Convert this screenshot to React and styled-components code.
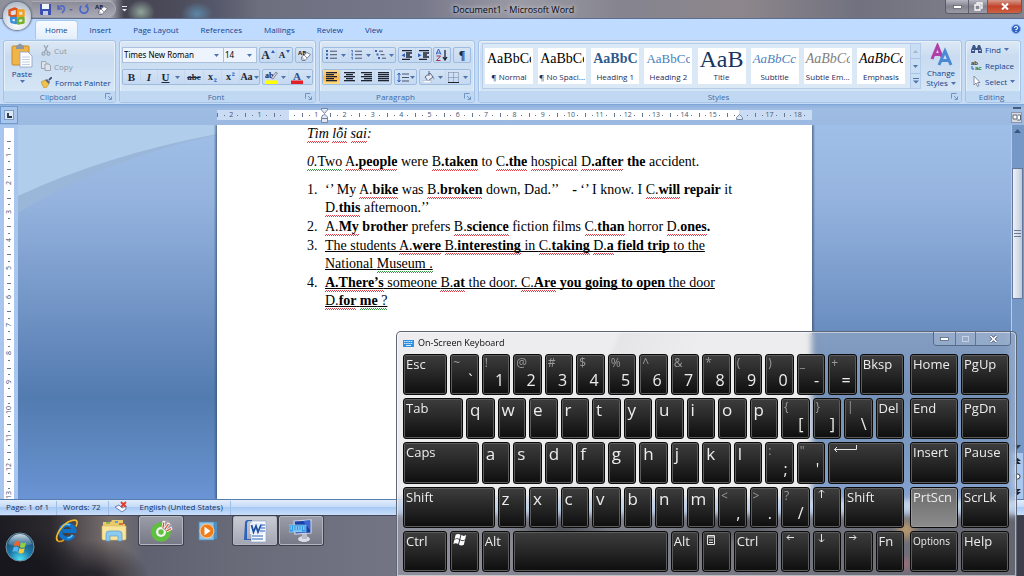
import React from "react";
import styled, { createGlobalStyle, css } from "styled-components";

const UI = `"Open Sans", "Noto Sans", sans-serif`;
const SERIF = `"Liberation Serif", "Times New Roman", serif`;

const GlobalStyle = createGlobalStyle`
  * { box-sizing: border-box; }
  html, body { margin: 0; height: 100%; }
  body { font-family: ${UI}; font-size: 8px; overflow: hidden; }
  button, select { font: inherit; color: inherit; margin: 0; padding: 0; border: 0; background: none; }
  svg { display: block; flex: none; }
`;

const Desktop = styled.div`
  height: 100vh;
  display: flex;
  flex-direction: column;
  overflow: hidden;
  position: relative;
  background: #6d6f7c;
`;

/* ---------- title bar ---------- */
const TitleBar = styled.header`
  height: 19px;
  flex: none;
  display: grid;
  grid-template-columns: 1fr auto 1fr;
  align-items: center;
  border-bottom: 1px solid #5d6f8c;
  background:
    radial-gradient(ellipse 14px 12px at 141px 12px, #90a59a, transparent),
    radial-gradient(ellipse 16px 12px at 197px 14px, #5d86a8, transparent),
    linear-gradient(90deg, #8f909a 0, #a6a7b0 110px, #454452 124px, #4a4a58 170px, #55586a 215px, #6d6e7e 260px, #77788a 420px, #9b9ba6 520px, #85848f 620px, #8d868c 740px, #71717f 860px, #85858f 100%);
`;
const QuickAccess = styled.div`
  display: flex;
  align-items: center;
  gap: 6px;
  margin-left: 32px;
  width: 84px;
  height: 16px;
  padding-left: 8px;
  border: 1px solid #a9aab6;
  border-left: 0;
  border-radius: 0 9px 9px 0;
  background: linear-gradient(#8c8c98, #a7a8b3);
`;
const QuickMore = styled.div`
  display: flex;
  align-items: center;
  gap: 6px;
`;
const IconButton = styled.button`
  display: flex;
  align-items: center;
  justify-content: center;
`;
const DocTitle = styled.h1`
  margin: 0;
  padding-left: 3px;
  padding-top: 2px;
  font-size: 9px;
  font-weight: 400;
  line-height: 16px;
  color: #08080c;
  text-shadow: 0 0 5px #d5d5dd, 0 0 5px #c5c5cc;
`;
const WindowButtons = styled.div`
  justify-self: end;
  align-self: start;
  display: flex;
  margin-right: 2px;
  height: 14px;
  border: 1px solid #595a66;
  border-top: 0;
  border-radius: 0 0 4px 4px;
  overflow: hidden;
`;
const WindowButton = styled.button`
  display: flex;
  align-items: center;
  justify-content: center;
  width: ${(p) => p.$w}px;
  background: ${(p) => (p.$close ? "linear-gradient(#d59a8c, #c2422a 50%, #ce6243)" : "linear-gradient(#b5b6c0, #82838f 50%, #9a9ba6)")};
  & + & { border-left: 1px solid #5f606c; }
`;
const OfficeButton = styled.button`
  position: absolute;
  z-index: 3;
  left: 3px;
  top: 2px;
  width: 28px;
  height: 28px;
  border-radius: 50%;
  display: flex;
  align-items: center;
  justify-content: center;
  background: radial-gradient(circle at 50% 75%, #fff, #d5dbe5 50%, #b5bdca 80%, #f0f3f8);
  box-shadow: 0 0 2px 1px #5e6b80;
`;

/* ---------- ribbon ---------- */
const TabRow = styled.nav`
  height: 20px;
  flex: none;
  display: flex;
  align-items: flex-end;
  gap: 4px;
  padding: 0 3px 0 36px;
  background: #bfdbff;
  color: #15428b;
`;
const Tab = styled.button`
  height: 18px;
  padding: 0 9px;
  line-height: 16px;
  border-radius: 3px 3px 0 0;
  ${(p) =>
    p.$active &&
    css`
      background: linear-gradient(#f7fbff, #e3eefb);
      box-shadow: 0 0 0 1px #a5c6ee;
      clip-path: inset(-1px -1px 0 -1px);
    `}
`;
const HelpSpot = styled.div`
  margin-left: auto;
  align-self: center;
`;
const Ribbon = styled.div`
  height: 66px;
  flex: none;
  display: flex;
  gap: 3px;
  padding: 1px 3px 1px;
  background: #c5dbf6;
  border-bottom: 1px solid #7fa6d6;
`;
const Group = styled.section`
  flex: ${(p) => (p.$grow ? "1 1 0" : "none")};
  width: ${(p) => (p.$w ? p.$w + "px" : "auto")};
  min-width: 0;
  display: flex;
  flex-direction: column;
  border: 1px solid #a5c3e6;
  border-radius: 3px;
  overflow: hidden;
  background: linear-gradient(#dce8f5, #cfdff1 20%, #c8dbf0 25%, #d9e9f8);
  box-shadow: inset 0 0 0 1px #e6f0fa;
  color: #15428b;
`;
const GroupBody = styled.div`
  flex: 1;
  min-height: 0;
  display: flex;
  padding: ${(p) => p.$pad || "0"};
  gap: ${(p) => p.$gap || 0}px;
`;
const GroupFoot = styled.footer`
  height: 11px;
  display: grid;
  grid-template-columns: 1fr auto 1fr;
  align-items: center;
  background: #c0d8f1;
  line-height: 11px;
  color: #3e6aaa;
  padding-right: 3px;
  svg { justify-self: end; }
`;
const PasteButton = styled.button`
  width: 32px;
  display: flex;
  flex-direction: column;
  align-items: center;
  line-height: 12px;
`;
const CommandList = styled.div`
  display: flex;
  flex-direction: column;
`;
const Command = styled.button`
  height: 16px;
  display: flex;
  align-items: center;
  gap: 3px;
  white-space: nowrap;
  color: ${(p) => (p.$off ? "#8d95a3" : "#15428b")};
`;
const Rows = styled.div`
  flex: 1;
  display: flex;
  flex-direction: column;
  gap: 6px;
`;
const Row = styled.div`
  display: flex;
  align-items: center;
  justify-content: space-between;
  height: 16px;
`;
const Combos = styled.div`
  display: flex;
  height: 16px;
`;
const Combo = styled.label`
  width: ${(p) => p.$w}px;
  display: flex;
  align-items: center;
  padding-right: 4px;
  border: 1px solid #abc1de;
  background: #edf4fd;
  & + & { border-left: 0; }
`;
const ComboSelect = styled.select`
  appearance: none;
  flex: 1;
  min-width: 0;
  height: 14px;
  padding-left: 1px;
  font-family: "Noto Sans", sans-serif;
  font-size: 8px;
  line-height: 14px;
  color: #000;
  outline: 0;
`;
const ButtonSet = styled.div`
  display: flex;
  height: 16px;
  border: 1px solid #9ebbe0;
  border-radius: 2px;
  background: linear-gradient(#d4e3f5, #c5d9f1);
`;
const ToolButton = styled.button`
  width: ${(p) => p.$w || 16}px;
  height: 14px;
  display: flex;
  align-items: center;
  justify-content: center;
  gap: ${(p) => p.$gap || 3}px;
  font-family: ${SERIF};
  font-size: ${(p) => p.$size || 10}px;
  font-weight: 700;
  line-height: 14px;
  color: #20293a;
  background: ${(p) => (p.$on ? "linear-gradient(#fbd98f, #ffb74c 60%, #ffe08a)" : "none")};
  & + & { border-left: 1px solid #c3d7ee; }
`;
const Gallery = styled.div`
  flex: 1;
  min-width: 0;
  display: flex;
  justify-content: space-between;
  align-items: center;
  height: 46px;
  border: 1px solid #b5cdea;
  background: #dbe8f6;
  padding-left: 2px;
  overflow: hidden;
`;
const StyleCard = styled.button`
  width: 48px;
  height: 36px;
  background: #fff;
  overflow: hidden;
  display: flex;
  flex-direction: column;
  color: #1e2a5a;
`;
const Preview = styled.span`
  height: 23px;
  width: 46px;
  overflow: hidden;
  white-space: nowrap;
  text-align: left;
  padding-left: 2px;
  font-family: ${SERIF};
  font-size: ${(p) => p.$size || 14}px;
  line-height: 22px;
  font-weight: ${(p) => (p.$bold ? 700 : 400)};
  font-style: ${(p) => (p.$italic ? "italic" : "normal")};
  color: ${(p) => p.$color || "#000"};
`;
const CardName = styled.span`
  width: 48px;
  text-align: center;
  line-height: 12px;
  white-space: nowrap;
`;
const GalleryScroll = styled.div`
  width: 10px;
  height: 44px;
  display: flex;
  flex-direction: column;
  border-left: 1px solid #b5cdea;
`;
const GalleryStep = styled(IconButton)`
  flex: 1;
  background: #c9ddf3;
  & + & { border-top: 1px solid #a9c5e6; }
`;
const ChangeStyles = styled.button`
  width: 36px;
  display: flex;
  flex-direction: column;
  align-items: center;
  line-height: 10px;
`;
const Inline = styled.span`
  display: flex;
  align-items: center;
  gap: 3px;
`;

/* ---------- rulers ---------- */
const RulerRow = styled.div`
  height: 20px;
  flex: none;
  display: grid;
  grid-template-columns: 18px 1fr 13px;
  align-items: center;
  background: linear-gradient(#8fb0de, #9fbce3 4px, #9bb9e1);
`;
const TabStop = styled.button`
  width: 18px;
  height: 18px;
  display: flex;
  align-items: center;
  justify-content: center;
  border: 1px solid #6f9ad0;
  background: #a8c6ec;
`;
const TabStopFace = styled.span`
  width: 10px;
  height: 10px;
  display: flex;
  align-items: center;
  justify-content: center;
  border: 1px solid #7d9cc8;
  background: #dce8f6;
`;
const HRuler = styled.div`
  position: relative;
  justify-self: center;
  width: 595px;
  height: 10px;
  display: flex;
  background: linear-gradient(90deg, #c9dcf3 72px, #fff 72px, #fff 522px, #c9dcf3 522px);
`;
const HCell = styled.span`
  flex: 1;
  text-align: center;
  font-size: 7px;
  line-height: 10px;
  color: #46556f;
  background:
    linear-gradient(#6a788f, #6a788f) 0 50% / 1px 4px no-repeat,
    linear-gradient(#6a788f, #6a788f) 25% 50% / 1px 1px no-repeat,
    linear-gradient(#6a788f, #6a788f) 75% 50% / 1px 1px no-repeat;
`;
const IndentMark = styled.span`
  position: absolute;
  left: ${(p) => p.$x}px;
  top: ${(p) => p.$y}px;
`;
const RulerToggle = styled(IconButton)`
  width: 11px;
  height: 20px;
  flex-direction: column;
  gap: 2px;
`;

/* ---------- work area ---------- */
const WorkArea = styled.main`
  flex: 1;
  min-height: 0;
  position: relative;
  display: grid;
  grid-template-columns: 18px 1fr 13px;
  background: linear-gradient(#a0bfe8, #95b3de 20%, #7a9ccc 42%, #6a8dc0 55%, #527bb0 73%, #5c86bd 85%, #6a94d4);
`;
const Swoosh = styled.svg`
  position: absolute;
  left: 18px;
  top: 0;
`;
const VRulerTrack = styled.div`
  min-height: 0;
  overflow: hidden;
  padding: 3px 4px 0;
  background: #a9c7ee;
`;
const VRuler = styled.div`
  height: 381px;
  padding-top: 13px;
  display: flex;
  flex-direction: column;
  background: #fff;
`;
const VCell = styled.span`
  flex: 1;
  display: flex;
  align-items: center;
  justify-content: center;
  font-size: 7px;
  line-height: 10px;
  color: #46556f;
  background:
    linear-gradient(#6a788f, #6a788f) 50% 0 / 4px 1px no-repeat,
    linear-gradient(#6a788f, #6a788f) 50% 25% / 2px 1px no-repeat,
    linear-gradient(#6a788f, #6a788f) 50% 75% / 2px 1px no-repeat;
`;
const Turned = styled.span`
  writing-mode: vertical-rl;
  transform: rotate(180deg);
`;
const Page = styled.article`
  position: relative;
  justify-self: center;
  width: 595px;
  padding: 0 0 0 90px;
  background: #fff;
  box-shadow: 0 0 3px 1px #3b5373;
  clip-path: inset(0 -3px 0 -3px);
  font-family: ${SERIF};
  font-size: 14px;
  line-height: 18px;
  color: #000;
  white-space: nowrap;
`;
const Para = styled.p`
  margin: 0 0 10px;
`;
const Questions = styled.ul`
  list-style: none;
  margin: 0;
  padding: 0;
`;
const Question = styled.li`
  display: flex;
  margin-bottom: 1px;
`;
const Num = styled.span`
  width: 18px;
`;
const Flag = styled.span`
  padding-bottom: 2px;
  background:
    repeating-linear-gradient(90deg, ${(p) => p.$c || "#e23a46"} 0 1px, transparent 1px 2px) 0 100% / 100% 1px no-repeat,
    repeating-linear-gradient(90deg, transparent 0 1px, ${(p) => p.$c || "#e23a46"} 1px 2px) 0 calc(100% - 1px) / 100% 1px no-repeat;
`;
const Under = styled.span`
  text-decoration: underline;
  text-decoration-thickness: 1px;
  text-underline-offset: 1px;
  text-decoration-skip-ink: none;
`;
const ScrollBar = styled.div`
  display: flex;
  flex-direction: column;
  border-left: 1px solid #b3cdf0;
  padding-right: 1px;
  background: #7698c6;
`;
const ScrollArrow = styled(IconButton)`
  height: ${(p) => p.$h || 11}px;
`;
const ScrollTrack = styled.div`
  flex: 1;
  min-height: 0;
  padding-top: 32px;
`;
const Thumb = styled.div`
  height: 131px;
  display: flex;
  align-items: center;
  justify-content: center;
  border: 1px solid #64799a;
  background: linear-gradient(90deg, #eef2f8, #d3dbe8 60%, #b9c8dd);
`;
const PageSteps = styled.div`
  height: 46px;
  display: flex;
  flex-direction: column;
  justify-content: space-around;
  align-items: center;
  background: #a9c7ee;
`;

/* ---------- status bar ---------- */
const StatusBar = styled.footer`
  height: 16px;
  flex: none;
  display: flex;
  align-items: center;
  padding-left: 1px;
  color: #15305f;
  border-top: 1px solid #567db0;
  background: linear-gradient(#e2edfb, #c5dbf8 45%, #a9caf5 50%, #c9defa);
`;
const StatusItem = styled.span`
  display: flex;
  align-items: center;
  height: 14px;
  line-height: 12px;
  padding: 0 7px 2px ${(p) => p.$l || 6}px;
  gap: 13px;
  border-right: 1px solid #a0bfe8;
`;

/* ---------- taskbar ---------- */
const TaskBar = styled.nav`
  height: 61px;
  flex: none;
  display: flex;
  align-items: flex-start;
  border-top: 1px solid #45485a;
  background:
    radial-gradient(ellipse 70px 50px at 20px 62px, #17171d 40%, transparent),
    radial-gradient(ellipse 60px 40px at 90px 64px, #26252c 20%, transparent),
    radial-gradient(ellipse 12px 12px at 906px 14px, #e0a040, transparent),
    radial-gradient(ellipse 10px 8px at 905px 48px, #b04a58, transparent),
    radial-gradient(ellipse 60px 16px at 560px 12px, #16161e, transparent),
    radial-gradient(ellipse 60px 20px at 730px 8px, #16161e, transparent),
    linear-gradient(90deg, #1c1c22 0, #2b292e 50px, #5d5659 85px, #78706f 110px, #5f6170 145px, #696b79 240px, #737584 400px, #5c5e6c 700px, #3c3d49 100%);
`;
const StartButton = styled(IconButton)`
  width: 40px;
  height: 61px;
  margin-right: 5px;
`;
const TaskButton = styled.button`
  width: 44px;
  height: 29px;
  margin-right: ${(p) => (p.$front ? 2 : 3)}px;
  display: flex;
  align-items: center;
  justify-content: center;
  border-radius: 2px;
  ${(p) =>
    p.$open &&
    css`
      border: 1px solid #b3b5c0;
      box-shadow: 0 0 0 1px #3d3f4b;
      background: ${p.$front ? "linear-gradient(#c9cbd4, #a4a7b3)" : "linear-gradient(#9a9ca8, #777986)"};
    `}
`;

/* ---------- on-screen keyboard ---------- */
const Keyboard = styled.section`
  position: absolute;
  z-index: 5;
  right: 7px;
  bottom: 0;
  width: 621px;
  height: 245px;
  display: flex;
  flex-direction: column;
  padding: 0 7px 4px 6px;
  border: 1px solid #5d6775;
  border-bottom: 0;
  border-radius: 5px 5px 0 0;
  box-shadow: inset 0 0 0 1px rgba(255, 255, 255, 0.5);
  background: linear-gradient(115deg, rgba(200, 200, 205, 0.32) 30%, rgba(180, 180, 186, 0.34) 31%, rgba(195, 195, 200, 0.3) 42%);
  backdrop-filter: blur(3px);
`;
const KeyboardBar = styled.header`
  height: 22px;
  flex: none;
  display: flex;
  align-items: center;
  justify-content: space-between;
`;
const KeyboardTitle = styled.h2`
  margin: 0;
  display: flex;
  align-items: center;
  gap: 4px;
  font-size: 9px;
  font-weight: 400;
  line-height: 20px;
  color: #08080c;
`;
const GlassButtons = styled.div`
  display: flex;
  align-self: flex-start;
  height: 14px;
  margin-right: -2px;
  border: 1px solid #566b8a;
  border-top: 0;
  border-radius: 0 0 4px 4px;
`;
const GlassButton = styled(IconButton)`
  width: ${(p) => p.$w}px;
  background: rgba(255, 255, 255, 0.15);
  & + & { border-left: 1px solid #5f7595; }
`;
const KeyBlocks = styled.div`
  flex: 1;
  display: flex;
  gap: 6px;
`;
const KeyGrid = styled.div`
  flex: ${(p) => p.$grow};
  display: grid;
  grid-template-columns: repeat(${(p) => p.$cols}, minmax(0, 1fr));
  grid-template-rows: repeat(5, 1fr);
  gap: 3px;
`;
const KeyCap = styled.button`
  grid-column: span ${(p) => p.$span};
  min-width: 0;
  position: relative;
  display: flex;
  flex-direction: column;
  justify-content: space-between;
  align-items: flex-start;
  padding: ${(p) => (p.$letter ? "0 0 0 3px" : "0 0 0 2px")};
  border: 1px solid #0a0a0a;
  border-radius: 3px;
  box-shadow: inset 0 0 0 1px ${(p) => (p.$lit ? "#9a9a9a" : "#5c5c5c")};
  background: ${(p) => (p.$lit ? "linear-gradient(#6a6a6a, #8c8c8c)" : "linear-gradient(#3d3d3d, #262626 50%, #0e0e0e)")};
  color: #ececec;
  font-size: ${(p) => p.$size || (p.$letter ? 17 : 13)}px;
  line-height: ${(p) => (p.$letter ? 21 : 18)}px;
  white-space: nowrap;
`;
const ShiftMark = styled.span`
  font-size: 12px;
  line-height: 16px;
  color: #9a9a9a;
`;
const MainMark = styled.span`
  align-self: flex-end;
  font-size: 16px;
  line-height: 16px;
  padding: 0 5px 6px 0;
`;

/* ---------- small drawings ---------- */
const Down = ({ c = "#4f74ab" }) => (
  <svg width="5" height="3" viewBox="0 0 5 3"><path d="M0 0h5L2.500 3z" fill={c} /></svg>
);
const Launcher = () => (
  <svg width="7" height="7" viewBox="0 0 7 7" fill="none" stroke="#6f93c3"><path d="M.5 5.500V.5h5M3 3l3 3M6.500 3.500v3h-3" /></svg>
);
const Eraser = () => (
  <svg width="13" height="13" viewBox="0 0 13 13"><text x="0" y="6" fontSize="6" fontFamily="Open Sans" fontWeight="700" fill="#223">AB</text><path d="M3.500 8l5.500-4.500 3.500 2-5.500 6H4z" fill="#f8fafd" stroke="#667" strokeWidth=".8" /><path d="M3.500 8l3.500 3.500M6 6l3 3" stroke="#667" strokeWidth=".7" /></svg>
);
const OfficeLogo = () => (
  <svg width="20" height="20" viewBox="0 0 20 20" fill="none" strokeWidth="2.400" strokeLinejoin="round">
    <path d="M2.500 4.500l5.500-2 2 1v6l-5 1-2.500-1.500z" stroke="#d9531e" />
    <path d="M11 4.500h5.500v5.500h-5.500z" stroke="#f2a01c" />
    <path d="M4 12h5v5l-4.500-1z" stroke="#3a8fd8" />
    <path d="M11 12.500l5.500-.5v4.500l-5.500 1z" stroke="#76b02f" />
  </svg>
);
const Lines = ({ rows, w = 11 }) => (
  <svg width={w} height="10" viewBox={`0 0 ${w} 10`}>
    {rows.map(([x, l], i) => <rect key={i} x={x} y={i * 2} width={l} height="1.300" fill="#1d2330" />)}
  </svg>
);
const ListIcon = ({ kind }) => (
  <svg width="11" height="10" viewBox="0 0 11 10">
    {[0, 1, 2].map((i) => (
      <g key={i} transform={`translate(${kind === "tree" ? i * 1.5 : 0} ${i * 3.500})`}>
        {kind === "num" ? <path d="M.3 .6L1.300 0v2.500" fill="none" stroke="#3a62b0" strokeWidth=".9" /> : <rect width="2" height="2" fill="#3a62b0" />}
        <rect x="4" y=".7" width={kind === "tree" ? 4 : 7} height="1" fill="#49536a" />
      </g>
    ))}
  </svg>
);
const IndentIcon = ({ flip }) => (
  <svg width="11" height="10" viewBox="0 0 11 10">
    <path d="M1 .7h10M5 3h6M5 5h4M5 7h6M1 9.300h8" stroke="#1d2330" strokeWidth="1.300" />
    <path d={flip ? "M0 3.200v4L3.500 5.200z" : "M4 3.200v4L.5 5.200z"} fill="#2f5fc0" />
  </svg>
);
const FlagLogo = ({ s = 14 }) => (
  <svg width={s} height={s} viewBox="0 0 14 14" fill="#fff">
    <path d="M2.500 2.500c1.500-1 3-1 4.500 0L6 6.500c-1.500-1-3-1-4.500 0z" />
    <path d="M7.800 2.900c1.500 1 3 1 4.500 0l-1 4c-1.500 1-3 1-4.500 0z" />
    <path d="M1.300 7.300c1.500-1 3-1 4.500 0l-1 4c-1.500-1-3-1-4.500 0z" />
    <path d="M6.600 7.800c1.500 1 3 1 4.500 0l-1 4c-1.500 1-3 1-4.500 0z" />
  </svg>
);
const StartOrb = () => (
  <svg width="30" height="30" viewBox="0 0 30 30">
    <defs>
      <radialGradient id="orb" cx=".5" cy=".95" r=".9"><stop offset="0" stopColor="#4fe0f5" /><stop offset=".45" stopColor="#1c78a8" /><stop offset="1" stopColor="#23435f" /></radialGradient>
      <linearGradient id="shine" x2="0" y2="1"><stop offset="0" stopColor="#e5f1f7" stopOpacity=".9" /><stop offset="1" stopColor="#9cc4dc" stopOpacity=".15" /></linearGradient>
    </defs>
    <circle cx="15" cy="15" r="14" fill="url(#orb)" stroke="#6f93a8" />
    <path d="M3 12C5 5 10 2 15 2s10 3 12 10c-7 3-17 3-24 0z" fill="url(#shine)" />
    <g transform="translate(7 7) scale(1.150)">
      <path d="M2.500 2.500c1.500-1 3-1 4.500 0L6 6.500c-1.500-1-3-1-4.500 0z" fill="#f0622c" />
      <path d="M7.800 2.900c1.500 1 3 1 4.500 0l-1 4c-1.500 1-3 1-4.500 0z" fill="#93cf3f" />
      <path d="M1.300 7.300c1.500-1 3-1 4.500 0l-1 4c-1.500-1-3-1-4.500 0z" fill="#56b4ee" />
      <path d="M6.600 7.800c1.500 1 3 1 4.500 0l-1 4c-1.500 1-3 1-4.500 0z" fill="#fdc82f" />
    </g>
  </svg>
);
const ExplorerE = () => (
  <svg width="26" height="26" viewBox="0 0 26 26" fill="none">
    <path d="M19.500 17a7 7 0 1 1 .8-4H9" stroke="#1173c8" strokeWidth="4.200" />
    <path d="M18.500 17a6 6 0 0 1-5 3M8 9a6 6 0 0 1 8-2" stroke="#6cc9f7" strokeWidth="1.500" />
    <path d="M4 23C-1 20 8 5 18 2.500c6-1.500 6 2 4 6" stroke="#f3b92a" strokeWidth="1.700" />
    <path d="M4 23c2 1.200 4 .2 6-1" stroke="#d99a1c" strokeWidth="1.500" />
  </svg>
);
const Folders = () => (
  <svg width="26" height="24" viewBox="0 0 26 24">
    <path d="M2 3h8l1-2h11v4h2v16H2z" fill="#e9c96a" />
    <path d="M5 3h4v2H5z" fill="#8fb94c" /><path d="M14 2h3v2h-3z" fill="#58a6dd" /><path d="M18 4h4v2h-4z" fill="#d7783a" />
    <path d="M1 7h24v13l-1 1H2l-1-1z" fill="#f8e49b" stroke="#dcb95a" strokeWidth=".6" />
    <path d="M5 22v-7q0-3 3-3h10q3 0 3 3v7h-4v-5H9v5z" fill="#8ccbee" stroke="#5a9fce" strokeWidth=".7" />
  </svg>
);
const CocCoc = () => (
  <svg width="24" height="24" viewBox="0 0 24 24">
    <circle cx="12" cy="13" r="7.300" fill="none" stroke="#5fbf3f" strokeWidth="5" />
    <circle cx="12" cy="13" r="5" fill="#f3f8ee" /><circle cx="12" cy="13" r="2.700" fill="#62c043" />
    <path d="M13 9L14 1h5l5 6-7 5z" fill="#a0a1ac" />
    <path d="M14 8.500L15 2M16 10l4-6M17.500 12l5.500-3" stroke="#fbf6f0" strokeWidth="2.800" />
    <path d="M14 8.500l.8-5M16 10l3.500-5M17.500 12l4.500-2.500" stroke="#dd4a36" strokeWidth="1.300" />
  </svg>
);
const Player = () => (
  <svg width="20" height="20" viewBox="0 0 20 20">
    <path d="M6 1h13v17H6z" fill="#4d8fc0" /><path d="M1 1h15v18H1z" fill="#8fc4e8" stroke="#4d8bbb" strokeWidth=".8" />
    <circle cx="9" cy="10" r="7" fill="#f07d1a" stroke="#fbd0a0" /><path d="M6.500 5.800v8.400l6-4.200z" fill="#fff" />
  </svg>
);
const WordIcon = () => (
  <svg width="24" height="24" viewBox="0 0 24 24">
    <path d="M8 2h15v21H8z" fill="#f8fafd" stroke="#8fa3c4" strokeWidth=".7" />
    <path d="M2 4q0-3 3-3h4v1H6q-2 0-2 3v15h4v1H1z" fill="#2c62b8" />
    <rect x="7" y="4" width="13" height="11" fill="#e8effa" />
    <path d="M8.500 6l2 7 2.500-6 2 6 3-7" fill="none" stroke="#1f4fa3" strokeWidth="1.800" />
    <path d="M17 6h5M18 9h4M17 12h5M9 17h11M9 20h11" stroke="#2c62b8" strokeWidth="1.200" />
  </svg>
);
const MonitorIcon = () => (
  <svg width="24" height="24" viewBox="0 0 24 24">
    <ellipse cx="15" cy="20" rx="6" ry="3" fill="#dcdfe6" /><path d="M13 14h5v6h-5z" fill="#b9bdc9" />
    <path d="M5 2l17-1v13L6 15z" fill="#1b3fa5" stroke="#c9d3e8" strokeWidth="1.200" /><path d="M14 2l7-1v10z" fill="#3b66d4" />
    <rect x="0" y="6" width="17" height="7" fill="#2f9be8" stroke="#a9dbfa" strokeWidth=".6" />
    <path d="M1.500 8h14M1.500 10h14" stroke="#dff2fe" strokeWidth=".9" strokeDasharray="1.500 1" /><path d="M4 12h9" stroke="#dff2fe" strokeWidth=".8" />
  </svg>
);

/* ---------- data ---------- */
const TABS = ["Home", "Insert", "Page Layout", "References", "Mailings", "Review", "View"];
const STYLES = [
  { name: "¶ Normal", sample: "AaBbCc" },
  { name: "¶ No Spaci...", sample: "AaBbCc" },
  { name: "Heading 1", sample: "AaBbC", bold: true, color: "#2f5a8c" },
  { name: "Heading 2", sample: "AaBbCc", size: 13, color: "#4a80bd" },
  { name: "Title", sample: "AaB", size: 24, color: "#17365d" },
  { name: "Subtitle", sample: "AaBbCc", size: 13, italic: true, color: "#4f81bd" },
  { name: "Subtle Em...", sample: "AaBbCc", italic: true, color: "#808080" },
  { name: "Emphasis", sample: "AaBbCc", italic: true },
];
const HNUM = ["2", "1", "", ...Array.from({ length: 18 }, (_, i) => (i === 15 ? "" : String(i + 1)))];
const VNUM = Array.from({ length: 13 }, (_, i) => String(i + 1));

const k = (label, span = 3, extra = {}) => ({ label, span, ...extra });
const pair = (shift, main) => ({ shift, main, span: 2 });
const letters = (s) => s.split("").map((c) => k(c, 2, { letter: true }));
const MAIN_KEYS = [
  k("Esc"), pair("~", "`"), pair("!", "1"), pair("@", "2"), pair("#", "3"), pair("$", "4"), pair("%", "5"), pair("^", "6"),
  pair("&", "7"), pair("*", "8"), pair("(", "9"), pair(")", "0"), pair("_", "-"), pair("+", "="), k("Bksp"),
  k("Tab", 4), ...letters("qwertyuiop"), pair("{", "["), pair("}", "]"), pair("|", "\\"), k("Del", 2),
  k("Caps", 5), ...letters("asdfghjkl"), pair(":", ";"), pair('"', "'"), k("Enter", 5, { icon: "enter" }),
  k("Shift", 6), ...letters("zxcvbnm"), pair("<", ","), pair(">", "."), pair("?", "/"), k("Up", 2, { icon: "up" }), k("Shift", 4),
  k("Ctrl"), k("Windows", 2, { icon: "win" }), k("Alt", 2), k("Space", 10, { icon: "space" }), k("Alt", 2),
  k("Menu", 2, { icon: "menu" }), k("Ctrl"), k("Left", 2, { icon: "left" }), k("Down", 2, { icon: "down" }), k("Right", 2, { icon: "right" }), k("Fn", 2),
];
const SIDE_KEYS = ["Home", "PgUp", "End", "PgDn", "Insert", "Pause", "PrtScn", "ScrLk", "Options", "Help"];

const KEY_ART = {
  enter: <svg width="28" height="12" viewBox="0 0 28 12" fill="none" stroke="#e6e6e6"><path d="M25.500 2v4.500H3.500M6 4L3.500 6.500 6 9" /></svg>,
  up: <svg width="10" height="12" viewBox="0 0 10 12" fill="none" stroke="#e6e6e6"><path d="M5.500 10V2M3 4.500L5.500 2 8 4.500" /></svg>,
  down: <svg width="10" height="12" viewBox="0 0 10 12" fill="none" stroke="#e6e6e6"><path d="M5.500 2v8M3 7.500L5.500 10 8 7.500" /></svg>,
  left: <svg width="11" height="10" viewBox="0 0 11 10" fill="none" stroke="#e6e6e6"><path d="M10 5.500H3M5.500 3L3 5.500 5.500 8" /></svg>,
  right: <svg width="11" height="10" viewBox="0 0 11 10" fill="none" stroke="#e6e6e6"><path d="M2 5.500h7M6.500 3L9 5.500 6.500 8" /></svg>,
  menu: <svg width="11" height="14" viewBox="0 0 11 14" fill="none" stroke="#e6e6e6"><path d="M2.500 3.500h7v9h-7zM2.500 5h7M4 8h4M4 10.500h4" /></svg>,
  win: <FlagLogo s={15} />,
  space: null,
};

const Key = ({ label, shift, main, span, letter, icon }) => (
  <KeyCap $span={span} $letter={letter} aria-label={icon ? label : undefined}>
    {icon !== undefined ? KEY_ART[icon] : shift ? (<><ShiftMark>{shift}</ShiftMark><MainMark>{main}</MainMark></>) : label}
  </KeyCap>
);

const RibbonGroup = ({ title, launcher, children, ...rest }) => (
  <Group {...rest}>
    {children}
    <GroupFoot><span />{title}{launcher ? <Launcher /> : <span />}</GroupFoot>
  </Group>
);

const R = ({ children }) => <Flag>{children}</Flag>;
const G = ({ children }) => <Flag $c="#2f9e40">{children}</Flag>;

export default function App() {
  return (
    <Desktop>
      <GlobalStyle />
      <TitleBar>
        <QuickMore>
          <QuickAccess>
            <IconButton aria-label="Save"><svg width="11" height="11" viewBox="0 0 11 11"><path d="M0 0h11v11H1L0 10z" fill="#3a4fb0" /><path d="M2 0h7v5H2z" fill="#f2f4fb" /><path d="M3 7h5v4H3z" fill="#c5cbe6" /></svg></IconButton>
            <IconButton aria-label="Undo"><svg width="16" height="10" viewBox="0 0 16 10"><path d="M1 1v4h4M1.500 4.500C4 0 9 2 7 6.500L5 9" fill="none" stroke="#5169c4" strokeWidth="1.700" /><path d="M12 5h4l-2 2z" fill="#556a9c" /></svg></IconButton>
            <IconButton aria-label="Repeat"><svg width="10" height="10" viewBox="0 0 10 10"><path d="M2.500 2a4 4 0 1 0 5 0M8.500 0L7 2.500l2.500 1" fill="none" stroke="#4a66cc" strokeWidth="1.700" /></svg></IconButton>
            <IconButton aria-label="Clear formatting"><Eraser /></IconButton>
          </QuickAccess>
          <IconButton aria-label="Customize"><svg width="5" height="6" viewBox="0 0 5 6"><path d="M0 .5h5" stroke="#e6e8ee" /><path d="M0 3h5L2.500 5.500z" fill="#e6e8ee" /></svg></IconButton>
        </QuickMore>
        <DocTitle>Document1 - Microsoft Word</DocTitle>
        <WindowButtons>
          <WindowButton $w={22} aria-label="Minimize"><svg width="9" height="4" viewBox="0 0 9 4"><rect x=".5" y=".5" width="8" height="3" fill="#fff" stroke="#555" strokeWidth=".7" /></svg></WindowButton>
          <WindowButton $w={19} aria-label="Restore"><svg width="9" height="9" viewBox="0 0 9 9" fill="none" stroke="#fff" strokeWidth="1.300"><path d="M3 2V1h5v5H7M1 3h5v5H1z" /></svg></WindowButton>
          <WindowButton $w={34} $close aria-label="Close"><svg width="8" height="7" viewBox="0 0 8 7"><path d="M1 .5l6 6M7 .5l-6 6" stroke="#fff" strokeWidth="2" /></svg></WindowButton>
        </WindowButtons>
      </TitleBar>
      <OfficeButton aria-label="Office Button"><OfficeLogo /></OfficeButton>

      <TabRow>
        {TABS.map((t) => <Tab key={t} $active={t === "Home"}>{t}</Tab>)}
        <HelpSpot><IconButton aria-label="Help"><svg width="10" height="10" viewBox="0 0 10 10"><circle cx="5" cy="5" r="4.500" fill="#2d62c4" stroke="#8fb0e6" /><path d="M3.300 4q.2-1.500 1.700-1.500T6.700 4Q6.500 5 5 5.500v.7M5 7v1" fill="none" stroke="#fff" strokeWidth="1.100" /></svg></IconButton></HelpSpot>
      </TabRow>

      <Ribbon>
        <RibbonGroup title="Clipboard" launcher $w={113}>
          <GroupBody $pad="1px 2px 0" $gap={3}>
            <PasteButton>
              <svg width="22" height="26" viewBox="0 0 22 26"><rect x="1" y="4" width="17" height="19" rx="1" fill="#f0b548" stroke="#c98a28" /><path d="M5 5q0-2 2-2 2-3 4 0 2 0 2 2v2H5z" fill="#8f97a3" /><path d="M9 10h8l4 4v11H9z" fill="#fdfdff" stroke="#8fa1bf" strokeWidth=".8" /><path d="M11 15h8M11 17.500h8M11 20h8M11 22.500h8" stroke="#b5c4dc" strokeWidth=".8" /></svg>
              Paste
              <Down />
            </PasteButton>
            <CommandList>
              <Command $off><svg width="10" height="11" viewBox="0 0 10 11" fill="none" stroke="#9aa3b0" strokeWidth="1.200"><path d="M3 0l3.500 7M7 0L3.500 7" /><circle cx="2.500" cy="8.700" r="1.500" /><circle cx="7.500" cy="8.700" r="1.500" /></svg>Cut</Command>
              <Command $off><svg width="10" height="10" viewBox="0 0 10 10" fill="#dfe4ec" stroke="#9aa3b0"><path d="M.5.5h4l1.500 2v5H.5z" /><path d="M4 3h4l1.500 2v4.500H4z" /></svg>Copy</Command>
              <Command><svg width="11" height="11" viewBox="0 0 11 11"><path d="M0 5l4-2 4 4-3 4H3z" fill="#f2c14a" stroke="#b98822" strokeWidth=".6" /><path d="M4 3l2-1 3 3-1 2z" fill="#5a6884" /><path d="M8 3l3-3" stroke="#3d4f74" strokeWidth="1.800" /></svg>Format Painter</Command>
            </CommandList>
          </GroupBody>
        </RibbonGroup>

        <RibbonGroup title="Font" launcher $w={197}>
          <GroupBody $pad="6px 2px 0">
            <Rows>
              <Row>
                <Combos>
                  <Combo $w={102}><ComboSelect aria-label="Font"><option>Times New Roman</option></ComboSelect><Down /></Combo>
                  <Combo $w={33}><ComboSelect aria-label="Font size"><option>14</option></ComboSelect><Down /></Combo>
                </Combos>
                <ButtonSet>
                  <ToolButton $size={12} $gap={1} aria-label="Grow font">A<svg width="4" height="10" viewBox="0 0 4 10"><path d="M0 3L2 0l2 3z" fill="#2f5fc0" /></svg></ToolButton>
                  <ToolButton $size={9} $gap={1} aria-label="Shrink font">A<svg width="4" height="10" viewBox="0 0 4 10"><path d="M0 0h4L2 3z" fill="#2f5fc0" /></svg></ToolButton>
                </ButtonSet>
                <ButtonSet><ToolButton aria-label="Clear formatting"><Eraser /></ToolButton></ButtonSet>
              </Row>
              <Row>
                <ButtonSet>
                  <ToolButton $w={17} $size={11}>B</ToolButton>
                  <ToolButton $w={17} $size={11}><i>I</i></ToolButton>
                  <ToolButton $w={27} $size={11} $gap={6}><u>U</u><Down /></ToolButton>
                  <ToolButton $w={19} $size={9}><s>abc</s></ToolButton>
                  <ToolButton $w={18} $gap={1} aria-label="Subscript">x<svg width="3" height="10" viewBox="0 0 3 10"><path d="M0 7h2.500L.3 9.500h2.500" fill="none" stroke="#2f5fc0" strokeWidth=".8" /></svg></ToolButton>
                  <ToolButton $w={18} $gap={1} aria-label="Superscript">x<svg width="3" height="10" viewBox="0 0 3 10"><path d="M0 1h2.500L.3 3.500h2.500" fill="none" stroke="#2f5fc0" strokeWidth=".8" /></svg></ToolButton>
                  <ToolButton $w={20} $gap={1}>Aa<Down /></ToolButton>
                </ButtonSet>
                <ButtonSet>
                  <ToolButton $w={25} aria-label="Highlight"><svg width="13" height="13" viewBox="0 0 13 13"><text x="0" y="7" fontSize="8" fontFamily="Liberation Serif" fontWeight="700" fill="#223">ab</text><path d="M6 7l5-6 1.500 1L8 8z" fill="#cfd6e4" stroke="#556" strokeWidth=".6" /><rect y="9.500" width="13" height="3.500" fill="#ffff00" /></svg><Down /></ToolButton>
                  <ToolButton $w={24} aria-label="Font color"><svg width="12" height="13" viewBox="0 0 12 13"><text x="2" y="9" fontSize="11" fontFamily="Liberation Serif" fontWeight="700" fill="#2a4f8f">A</text><rect y="9.500" width="12" height="3.500" fill="#e81e25" /></svg><Down /></ToolButton>
                </ButtonSet>
              </Row>
            </Rows>
          </GroupBody>
        </RibbonGroup>

        <RibbonGroup title="Paragraph" launcher $w={156}>
          <GroupBody $pad="6px 3px 0 2px">
            <Rows>
              <Row>
                <ButtonSet>
                  <ToolButton $w={25} $gap={4} aria-label="Bullets"><ListIcon /><Down /></ToolButton>
                  <ToolButton $w={25} $gap={4} aria-label="Numbering"><ListIcon kind="num" /><Down /></ToolButton>
                  <ToolButton $w={22} aria-label="Multilevel list"><ListIcon kind="tree" /><Down /></ToolButton>
                </ButtonSet>
                <ButtonSet>
                  <ToolButton aria-label="Decrease indent"><IndentIcon /></ToolButton>
                  <ToolButton aria-label="Increase indent"><IndentIcon flip /></ToolButton>
                </ButtonSet>
                <ButtonSet><ToolButton aria-label="Sort"><svg width="12" height="12" viewBox="0 0 12 12" fill="none"><path d="M0 5.500L2.500 0 5 5.500M1 4h3" stroke="#2f5fc0" /><path d="M.5 7h4l-4 4.500h4" stroke="#a3324a" /><path d="M9 1v9M7 8l2 3 2-3" stroke="#1d2330" strokeWidth="1.300" /></svg></ToolButton></ButtonSet>
                <ButtonSet><ToolButton $size={12}>¶</ToolButton></ButtonSet>
              </Row>
              <Row>
                <ButtonSet>
                  <ToolButton $w={17} $on aria-label="Align left"><Lines rows={[[0, 11], [0, 8], [0, 11], [0, 8], [0, 11]]} /></ToolButton>
                  <ToolButton $w={17} aria-label="Center"><Lines rows={[[0, 11], [2, 7], [0, 11], [2, 7], [0, 11]]} /></ToolButton>
                  <ToolButton $w={17} aria-label="Align right"><Lines rows={[[0, 11], [3, 8], [0, 11], [3, 8], [0, 11]]} /></ToolButton>
                  <ToolButton $w={17} aria-label="Justify"><Lines rows={[[0, 11], [0, 11], [0, 11], [0, 11], [0, 11]]} /></ToolButton>
                </ButtonSet>
                <ButtonSet><ToolButton $w={21} $gap={1} aria-label="Line spacing"><svg width="12" height="11" viewBox="0 0 12 11"><path d="M2 1v9M.5 3L2 1l1.500 2M.5 8L2 10l1.500-2" fill="none" stroke="#2f5fc0" /><path d="M5 2h7M5 5.500h7M5 9h7" stroke="#49536a" /></svg><Down /></ToolButton></ButtonSet>
                <ButtonSet>
                  <ToolButton $w={25} aria-label="Shading"><svg width="12" height="12" viewBox="0 0 12 12"><path d="M2 6l5-4 3 4-5 4z" fill="#e8edf5" stroke="#5c6984" /><path d="M6 0v5" stroke="#5c6984" /><path d="M10 5q2 2 1 4z" fill="#5c6984" /><rect y="9.500" width="8" height="2.500" fill="#f8fafd" stroke="#9aa9c4" strokeWidth=".5" /></svg><Down /></ToolButton>
                  <ToolButton $w={25} $gap={4} aria-label="Borders"><svg width="11" height="11" viewBox="0 0 11 11" fill="none" stroke="#6f7f9c"><path d="M.5.5h10v10M.5.5v10M5.500.5v10M.5 5.500h10" strokeDasharray="1 1" /><path d="M0 10.500h11" stroke="#222" /></svg><Down /></ToolButton>
                </ButtonSet>
              </Row>
            </Rows>
          </GroupBody>
        </RibbonGroup>

        <RibbonGroup title="Styles" launcher $grow>
          <GroupBody $pad="2px 2px 0 3px" $gap={2}>
            <Gallery>
              {STYLES.map((s) => (
                <StyleCard key={s.name}>
                  <Preview $size={s.size} $bold={s.bold} $italic={s.italic} $color={s.color}>{s.sample}</Preview>
                  <CardName>{s.name}</CardName>
                </StyleCard>
              ))}
              <GalleryScroll>
                <GalleryStep aria-label="Previous styles"><svg width="5" height="3" viewBox="0 0 5 3"><path d="M0 3h5L2.500 0z" fill="#a9b6c9" /></svg></GalleryStep>
                <GalleryStep aria-label="Next styles"><Down /></GalleryStep>
                <GalleryStep aria-label="More styles"><svg width="6" height="6" viewBox="0 0 6 6"><path d="M0 .5h6" stroke="#4f74ab" /><path d="M0 2.500h6L3 5.500z" fill="#4f74ab" /></svg></GalleryStep>
              </GalleryScroll>
            </Gallery>
            <ChangeStyles>
              <svg width="24" height="25" viewBox="0 0 24 25" fill="none">
                <path d="M3 16L8.500 3l4.500 11M5 11.500h6" stroke="#b03fa8" strokeWidth="3" />
                <path d="M10 22l6-14 6 14M12 17.500h8" stroke="#4a8ad4" strokeWidth="3" />
              </svg>
              <span>Change</span>
              <Inline>Styles<Down /></Inline>
            </ChangeStyles>
          </GroupBody>
        </RibbonGroup>

        <RibbonGroup title="Editing" $w={56}>
          <GroupBody $pad="0 0 0 5px">
            <CommandList>
              <Command><svg width="11" height="10" viewBox="0 0 11 10"><path d="M2 1h2l1 3h1l1-3h2l2 5v3H7V6H4v3H0V6z" fill="#3e5788" /><path d="M1 6.500h2M8 6.500h2" stroke="#cfdcf0" /></svg>Find<Down /></Command>
              <Command><svg width="11" height="11" viewBox="0 0 11 11" fill="none"><text x="0" y="5" fontSize="6" fontFamily="Liberation Sans" fontWeight="700" fill="#334">ab</text><text x="4" y="10" fontSize="6" fontFamily="Liberation Sans" fontWeight="700" fill="#2a7a3a">ac</text><path d="M1 6v3h2" stroke="#2f5fc0" /></svg>Replace</Command>
              <Command><svg width="11" height="11" viewBox="0 0 11 11"><path d="M3 0v9l2-2 1.500 3.500 1.500-.7L6.500 6.500H9z" fill="#fff" stroke="#6d7a94" strokeWidth=".8" /></svg>Select<Down /></Command>
            </CommandList>
          </GroupBody>
        </RibbonGroup>
      </Ribbon>

      <RulerRow>
        <TabStop aria-label="Tab stop"><TabStopFace><svg width="5" height="5" viewBox="0 0 5 5"><path d="M1 0v4h4" fill="none" stroke="#26324a" strokeWidth="1.800" /></svg></TabStopFace></TabStop>
        <HRuler>
          {HNUM.map((n, i) => <HCell key={i}>{n}</HCell>)}
          <IndentMark $x={104} $y={-2}><svg width="7" height="15" viewBox="0 0 7 15" fill="#dfe8f4" stroke="#6e7f9b" strokeWidth=".9"><path d="M.5.5h6v1.500L3.500 5.500.5 2zM3.500 6l3 3v1.500h-6V9zM.5 10.500h6v4h-6z" /></svg></IndentMark>
          <IndentMark $x={519} $y={4}><svg width="7" height="6" viewBox="0 0 7 6" fill="#dfe8f4" stroke="#6e7f9b" strokeWidth=".9"><path d="M3.500.5l3 3v2h-6v-2z" /></svg></IndentMark>
        </HRuler>
        <RulerToggle aria-label="View ruler"><svg width="11" height="18" viewBox="0 0 11 18"><path d="M2 2h8" stroke="#2d3d5c" strokeWidth="1.500" /><rect x=".5" y="6.500" width="10" height="10" fill="#d8dbe2" stroke="#8d96a8" /><path d="M2 9h4v4H2zM7 9h2.500v5H6" fill="#fff" stroke="#5b6475" /></svg></RulerToggle>
      </RulerRow>

      <WorkArea>
        <Swoosh width="199" height="88" viewBox="0 0 199 88" aria-hidden="true">
          <path d="M0 0h199v10Q92 32 0 88z" fill="#9ab7da" />
          <path d="M0 0h199v9Q88 30 0 71z" fill="#b0cdeb" />
        </Swoosh>
        <VRulerTrack>
          <VRuler>{VNUM.map((n) => <VCell key={n}><Turned>{n}</Turned></VCell>)}</VRuler>
        </VRulerTrack>
        <Page>
          <Para><i><R>Tìm</R> <R>lỗi</R> <R>sai</R>:</i></Para>
          <Para><G><i>0.</i>Two</G> <R>A<b>.people</b></R> were <R>B<b>.taken</b></R> to <R>C<b>.the</b></R> <R>hospical</R> <R>D<b>.after</b></R> <b>the</b> accident.</Para>
          <Questions>
            <Question><Num>1.</Num><span>‘’ My <R>A.<b>bike</b></R> was <R>B.<b>broken</b></R> down, Dad.’’ &nbsp; &nbsp;<b>-</b> ‘’ I know. I <R>C.<b>will</b></R><b> repair</b> it<br /><R>D.<b>this</b></R> afternoon.’’</span></Question>
            <Question><Num>2.</Num><span><R>A.<b>My</b></R><b> brother</b> prefers <R>B.<b>science</b></R> fiction films <R>C.<b>than</b></R> horror <R>D.<b>ones</b></R><b>.</b></span></Question>
            <Question><Num>3.</Num><Under>The students <R>A.<b>were</b></R> <R>B.<b>interesting</b></R> in <R>C.<b>taking</b></R> <R>D.<b>a</b></R><b> field trip</b> to the<br />National <G>Museum .</G></Under></Question>
            <Question><Num>4.</Num><Under><R><b>A.There’s</b></R> someone <R>B.<b>at</b></R> the door. <R>C.<b>Are</b></R><b> you going to open</b> the door<br /><R>D.<b>for</b></R><b> <G>me</G></b><G> ?</G></Under></Question>
          </Questions>
        </Page>
        <ScrollBar>
          <ScrollArrow aria-label="Scroll up"><svg width="7" height="4" viewBox="0 0 7 4"><path d="M0 4h7L3.500 0z" fill="#3a5580" /></svg></ScrollArrow>
          <ScrollTrack><Thumb><svg width="7" height="7" viewBox="0 0 7 7"><path d="M0 .5h7M0 3.500h7M0 6.500h7" stroke="#6b7b95" /></svg></Thumb></ScrollTrack>
          <ScrollArrow $h={12} aria-label="Scroll down"><svg width="7" height="4" viewBox="0 0 7 4"><path d="M0 0h7L3.500 4z" fill="#2b3a55" /></svg></ScrollArrow>
          <PageSteps>
            <svg width="7" height="6" viewBox="0 0 7 6"><path d="M0 3l3.500-3L7 3M0 6l3.500-3L7 6" fill="#1c2333" /></svg>
            <svg width="7" height="7" viewBox="0 0 7 7"><circle cx="3.500" cy="3.500" r="2.500" fill="#fff" stroke="#333" /></svg>
            <svg width="7" height="6" viewBox="0 0 7 6"><path d="M0 0l3.500 3L7 0M0 3l3.500 3L7 3" fill="#1c2333" /></svg>
          </PageSteps>
        </ScrollBar>
      </WorkArea>

      <StatusBar>
        <StatusItem $l={5}>Page: 1 of 1</StatusItem>
        <StatusItem>Words: 72</StatusItem>
        <StatusItem>
          <svg width="12" height="12" viewBox="0 0 12 12"><path d="M0 6l4-2 3 3 4-2v3l-4 3z" fill="#f3f6fb" stroke="#5b76ac" strokeWidth=".9" /><path d="M6 1l5 5M11 1L6 6" stroke="#e23b2e" strokeWidth="1.800" /></svg>
          English (United States)
        </StatusItem>
      </StatusBar>

      <TaskBar>
        <StartButton aria-label="Start"><StartOrb /></StartButton>
        <TaskButton aria-label="Internet Explorer"><ExplorerE /></TaskButton>
        <TaskButton aria-label="Windows Explorer"><Folders /></TaskButton>
        <TaskButton $open aria-label="Browser"><CocCoc /></TaskButton>
        <TaskButton aria-label="Media Player"><Player /></TaskButton>
        <TaskButton $open $front aria-label="Word"><WordIcon /></TaskButton>
        <TaskButton $open aria-label="Keyboard"><MonitorIcon /></TaskButton>
      </TaskBar>

      <Keyboard>
        <KeyboardBar>
          <KeyboardTitle>
            <svg width="11" height="7" viewBox="0 0 11 7"><rect width="11" height="7" fill="#2f8fe0" /><path d="M1 1.500h9M1 3.500h9" stroke="#d6ecfc" strokeDasharray="1.500 .7" /><path d="M3 5.500h5" stroke="#d6ecfc" /></svg>
            On-Screen Keyboard
          </KeyboardTitle>
          <GlassButtons>
            <GlassButton $w={21} aria-label="Minimize keyboard"><svg width="9" height="4" viewBox="0 0 9 4"><rect x=".5" y=".5" width="8" height="3" fill="#fff" stroke="#556680" strokeWidth=".8" /></svg></GlassButton>
            <GlassButton $w={20} aria-label="Maximize keyboard"><svg width="7" height="6" viewBox="0 0 7 6"><rect x=".5" y=".5" width="6" height="5" fill="none" stroke="#c6d2e4" /></svg></GlassButton>
            <GlassButton $w={35} aria-label="Close keyboard"><svg width="9" height="8" viewBox="0 0 9 8"><path d="M1.500 1l6 6M7.500 1l-6 6" stroke="#45566f" strokeWidth="3" /><path d="M1.500 1l6 6M7.500 1l-6 6" stroke="#fff" strokeWidth="1.700" /></svg></GlassButton>
          </GlassButtons>
        </KeyboardBar>
        <KeyBlocks>
          <KeyGrid $cols={32} $grow={501}>
            {MAIN_KEYS.map((key, i) => <Key key={i} {...key} />)}
          </KeyGrid>
          <KeyGrid $cols={2} $grow={99}>
            {SIDE_KEYS.map((name) => (
              <KeyCap key={name} $span={1} $lit={name === "PrtScn"} $size={name === "Options" ? 10 : 13}>{name}</KeyCap>
            ))}
          </KeyGrid>
        </KeyBlocks>
      </Keyboard>
    </Desktop>
  );
}
